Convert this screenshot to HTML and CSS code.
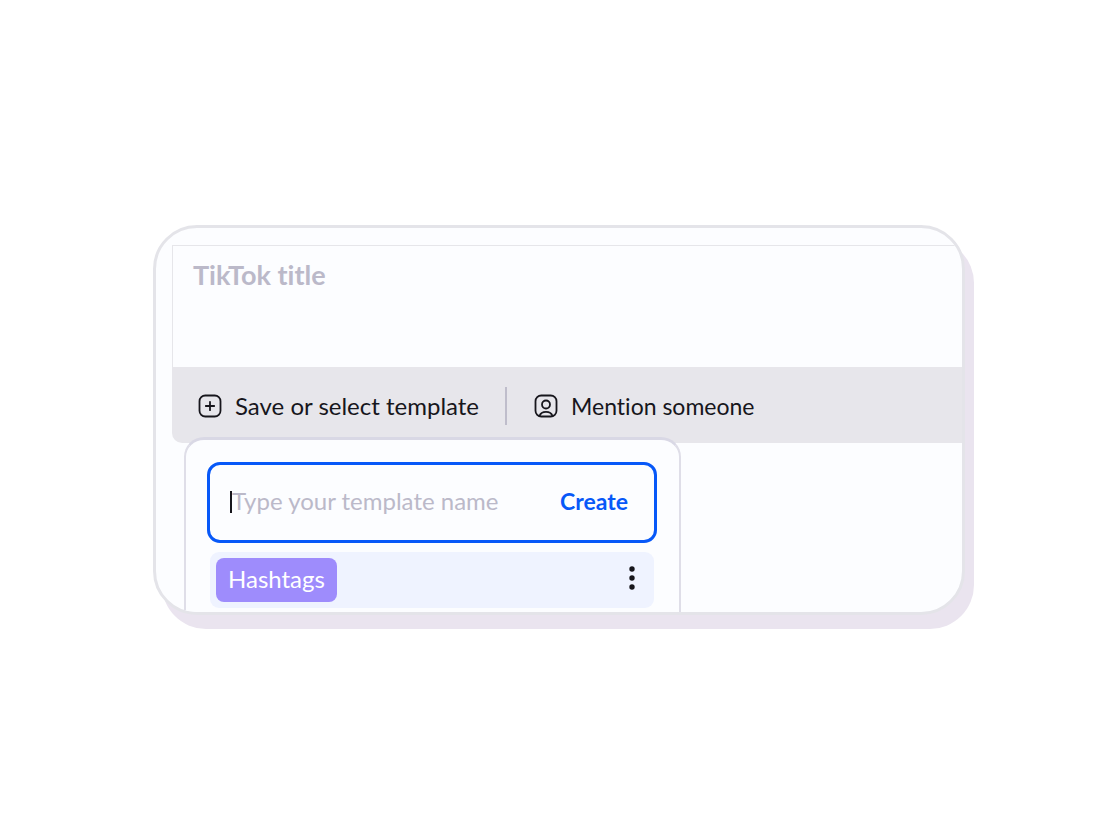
FILE: index.html
```html
<!DOCTYPE html>
<html lang="en">
<head>
<meta charset="utf-8">
<title>TikTok title templates</title>
<link rel="stylesheet" href="styles.css">
</head>
<body>
<main class="card">
  <section class="composer">
    <textarea class="title-field" aria-label="TikTok title" placeholder="TikTok title"></textarea>
    <div class="toolbar">
      <button class="tool tool-template" type="button">
        <svg class="icon" viewBox="0 0 24 24" fill="none" stroke="currentColor" stroke-width="1.8" stroke-linecap="round" aria-hidden="true">
          <rect x="1.500" y="1.500" width="21" height="21" rx="5.800"/>
          <path d="M12 7.800v8.400M7.800 12h8.400"/>
        </svg>
        <span>Save or select template</span>
      </button>
      <button class="tool tool-mention" type="button">
        <svg class="icon" viewBox="0 0 24 24" fill="none" stroke="currentColor" stroke-width="1.8" stroke-linecap="round" aria-hidden="true">
          <rect x="1.500" y="1.500" width="21" height="21" rx="5.800"/>
          <circle cx="12" cy="10.500" r="4"/>
          <path d="M5.600 21.800c.8-2.500 3.300-4 6.400-4s5.600 1.500 6.400 4"/>
        </svg>
        <span>Mention someone</span>
      </button>
    </div>
  </section>
  <section class="popup">
    <form class="create">
      <span class="caret"></span>
      <input class="create-name" type="text" aria-label="Template name" placeholder="Type your template name">
      <button class="create-button" type="button">Create</button>
    </form>
    <div class="template">
      <button class="tag" type="button">Hashtags</button>
      <button class="more" type="button" aria-label="More options">
        <svg class="dots" viewBox="0 0 6 24" fill="currentColor" aria-hidden="true">
          <circle cx="3" cy="3" r="2.700"/><circle cx="3" cy="12" r="2.700"/><circle cx="3" cy="21" r="2.700"/>
        </svg>
      </button>
    </div>
  </section>
</main>
</body>
</html>
```
FILE: styles.css
```css
* { box-sizing: border-box; }

body {
  margin: 0;
  padding: 225px 153px;
  background: #fff;
  color: #17161c;
  font-family: Lato, "Liberation Sans", sans-serif;
  font-size: 24px;
  font-variant-ligatures: none;
  line-height: 28px;
}

button, input, textarea {
  margin: 0;
  padding: 0;
  border: 0;
  background: none;
  color: inherit;
  font: inherit;
  font-variant-ligatures: none;
}

.card {
  padding: 17px 0 0 16px;
  overflow: hidden;
  border: 3px solid #e4e4e9;
  border-radius: 44px;
  background: #fcfdff;
  box-shadow: 9px 14px 0 #eae4ef;
}

.title-field {
  display: block;
  width: 100%;
  height: 122px;
  padding: 15px 20px;
  border: solid #e6e6ea;
  border-width: 1px 0 0 1px;
  resize: none;
  outline: none;
  font-size: 27px;
  font-weight: 700;
}

.title-field::placeholder,
.create-name::placeholder {
  color: #bbb9c9;
  opacity: 1;
}

.toolbar {
  display: flex;
  align-items: center;
  height: 76px;
  padding: 2px 26px 0;
  border-bottom-left-radius: 10px;
  background: #e7e6eb;
}

.tool {
  display: flex;
  align-items: center;
  gap: 13px;
  height: 38px;
  white-space: nowrap;
}

.tool-template { padding-right: 26px; }

.tool-mention {
  padding-left: 27px;
  border-left: 2px solid #bfbdcb;
  font-size: 23px;
}

.icon {
  flex: none;
  width: 24px;
  height: 24px;
}

.popup {
  position: relative;
  width: 497px;
  max-width: 100%;
  margin: -6px 0 0 12px;
  padding: 22px 22px 4px 21px;
  border: solid #dfdee8;
  border-width: 3px 2px 0;
  border-top-color: #d9d8e5;
  border-radius: 20px 20px 0 0;
  background: #fcfdff;
}

.create {
  display: flex;
  align-items: center;
  height: 81px;
  margin-bottom: 9px;
  padding: 0 26px 2px 20px;
  border: 3px solid #0758f8;
  border-radius: 13px;
}

.caret {
  flex: none;
  width: 2px;
  height: 22px;
  background: #17161c;
}

.create-name {
  flex: 1;
  min-width: 0;
  padding-bottom: 2px;
  outline: none;
}

.create-button {
  padding-bottom: 2px;
  color: #0758f8;
  font-size: 23px;
  font-weight: 700;
}

.template {
  display: flex;
  align-items: center;
  justify-content: space-between;
  height: 56px;
  margin: 0 3px;
  padding: 0 19px 0 6px;
  border-radius: 9px;
  background: #eff3ff;
}

.tag {
  height: 44px;
  padding: 0 12px 2px;
  border-radius: 8px;
  background: #9e8cfc;
  color: #fff;
}

.more {
  display: flex;
  padding-bottom: 4px;
}

.dots {
  width: 6px;
  height: 24px;
}
```
